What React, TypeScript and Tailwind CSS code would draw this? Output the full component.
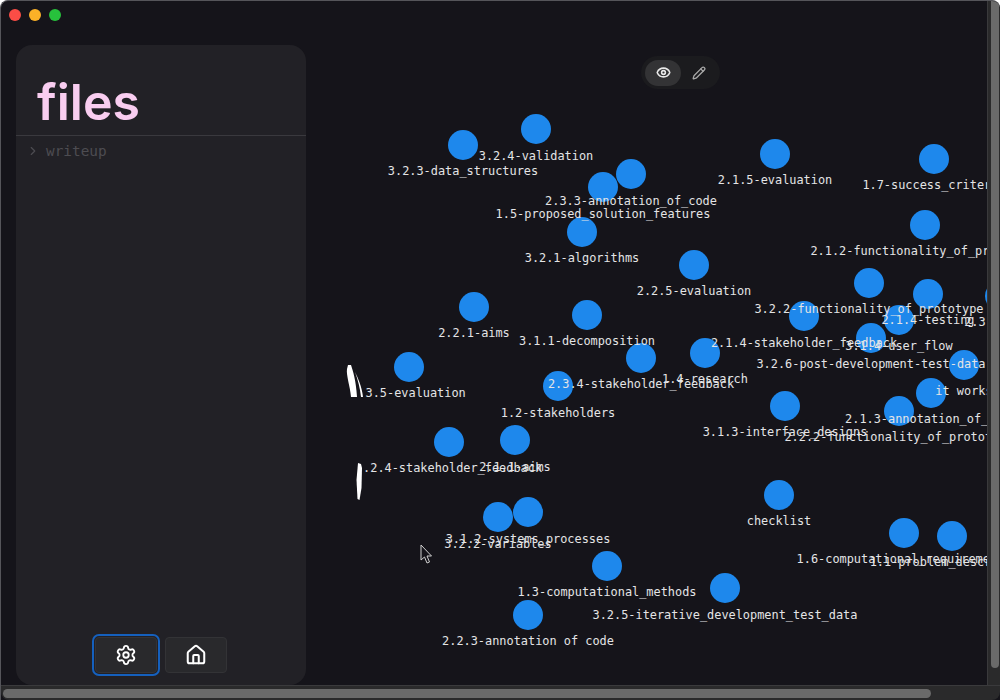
import { ChevronRight, Eye, House, Pencil, Settings } from "lucide-react";

// x, y = circle centre, ly = label centre line
const nodes: { x: number; y: number; ly: number; label: string }[] = [
  { x: 463, y: 145, ly: 171, label: "3.2.3-data_structures" },
  { x: 536, y: 129, ly: 156, label: "3.2.4-validation" },
  { x: 631, y: 174, ly: 201, label: "2.3.3-annotation_of_code" },
  { x: 603, y: 187, ly: 214, label: "1.5-proposed_solution_features" },
  { x: 582, y: 232, ly: 258, label: "3.2.1-algorithms" },
  { x: 775, y: 154, ly: 180, label: "2.1.5-evaluation" },
  { x: 934, y: 159, ly: 185, label: "1.7-success_criteria" },
  { x: 925, y: 225, ly: 251, label: "2.1.2-functionality_of_prototype" },
  { x: 694, y: 265, ly: 291, label: "2.2.5-evaluation" },
  { x: 869, y: 283, ly: 309, label: "3.2.2-functionality_of_prototype" },
  { x: 928, y: 294, ly: 320, label: "2.1.4-testing" },
  { x: 1000, y: 296, ly: 322, label: "2.3.2-aims" },
  { x: 899, y: 320, ly: 346, label: "3.1.4-user_flow" },
  { x: 871, y: 338, ly: 364, label: "3.2.6-post-development-test-data" },
  { x: 804, y: 316, ly: 343, label: "2.1.4-stakeholder_feedback" },
  { x: 964, y: 365, ly: 391, label: "it works" },
  { x: 931, y: 393, ly: 419, label: "2.1.3-annotation_of_code" },
  { x: 899, y: 411, ly: 437, label: "2.2.2-functionality_of_prototype" },
  { x: 785, y: 406, ly: 432, label: "3.1.3-interface_designs" },
  { x: 641, y: 358, ly: 384, label: "2.3.4-stakeholder_feedback" },
  { x: 705, y: 353, ly: 379, label: "1.4-research" },
  { x: 558, y: 386, ly: 413, label: "1.2-stakeholders" },
  { x: 587, y: 315, ly: 341, label: "3.1.1-decomposition" },
  { x: 474, y: 307, ly: 333, label: "2.2.1-aims" },
  { x: 408.5, y: 367, ly: 393, label: "2.3.5-evaluation" },
  { x: 449, y: 442, ly: 468, label: "3.2.4-stakeholder_feedback" },
  { x: 515, y: 440, ly: 467, label: "2.1.1-aims" },
  { x: 779, y: 494.5, ly: 521, label: "checklist" },
  { x: 498, y: 517, ly: 544, label: "3.2.2-variables" },
  { x: 528, y: 512, ly: 539, label: "3.1.2-systems_processes" },
  { x: 607, y: 566, ly: 592, label: "1.3-computational_methods" },
  { x: 725, y: 588, ly: 615, label: "3.2.5-iterative_development_test_data" },
  { x: 528, y: 615, ly: 641, label: "2.2.3-annotation of code" },
  { x: 904, y: 533, ly: 559, label: "1.6-computational_requirements" },
  { x: 952, y: 536, ly: 562, label: "1.1-problem_description" },
];

function Sidebar() {
  return (
    <aside className="flex h-[640px] w-[290px] flex-col rounded-2xl bg-[#222126]">
      <h1 className="h-[91px] border-b border-[#3a393e] pl-[21px] pt-[25px] font-['Inter',sans-serif] text-[50px] font-semibold leading-[64px] text-[#f9cdf0] [font-variant-ligatures:none]">
        files
      </h1>
      <div className="flex items-center gap-[6px] pl-[10px] pt-[6px] font-['DejaVu_Sans_Mono',monospace] text-[14.4px] leading-[18px] text-[#4d4c51]">
        <ChevronRight size={14} strokeWidth={2} />
        writeup
      </div>
      <div className="mt-auto flex justify-center gap-[8px] pb-[12px]">
        <button className="flex h-[36px] w-[62px] items-center justify-center rounded-[4px] border border-[#333336] bg-[#29292c] text-white outline-2 outline-offset-1 outline-[#1560bd]">
          <Settings size={22} strokeWidth={2} />
        </button>
        <button className="flex h-[36px] w-[62px] items-center justify-center rounded-[4px] border border-[#333336] bg-[#29292c] text-white">
          <House size={22} strokeWidth={2.2} />
        </button>
      </div>
    </aside>
  );
}

function Graph() {
  return (
    <>
      {nodes.map((n) => (
        <div
          key={n.label + "-dot"}
          className="absolute h-[30px] w-[30px] rounded-full bg-[#1e88ec]"
          style={{ left: n.x - 15, top: n.y - 15 }}
        />
      ))}
      {nodes.map((n) => (
        <div
          key={n.label}
          className="absolute whitespace-nowrap font-['DejaVu_Sans_Mono',monospace] text-[11.9px] leading-[16px] text-[#e4e4e6]"
          style={{ left: n.x - n.label.length * 3.58, top: n.ly - 8 }}
        >
          {n.label}
        </div>
      ))}
      {/* pencil scribbles on the canvas */}
      <svg className="absolute left-[340px] top-[360px] h-[145px] w-[30px]" viewBox="0 0 30 145" fill="none">
        <rect x="5" y="24" width="19" height="14" fill="#15141a" />
        <rect x="12" y="100" width="12" height="16" fill="#15141a" />
        <path d="M8 5 L11 5 C13 11 16 20 17 37 L11 37 C10 26 6 15 7 9 Z" fill="#fff" />
        <path d="M15 12 C18 18 22 27 23 37 L21 37 C20 28 18 20 15 12 Z" fill="#fff" />
        <path d="M18 103 L21 104 L22 108 L21.5 128 L19.5 140 L17.5 139 L16.5 120 Z" fill="#fff" />
      </svg>
      {/* mouse pointer */}
      <svg className="absolute left-[418px] top-[542px] h-[24px] w-[18px]" viewBox="0 0 18 24">
        <path d="M3 3 L3 18 L6.5 15 L9 21 L11.5 20 L9 14 L13.5 14 Z" fill="#15141a" stroke="#d0d0d0" strokeWidth="1" />
      </svg>
    </>
  );
}

export default function App() {
  return (
    <div className="flex h-[700px] w-[1000px] flex-col overflow-hidden rounded-t-lg border-l border-t border-[#55555a] bg-[#15141a]">
      <div className="flex min-h-0 flex-1">
        <main className="relative -ml-px -mt-px flex-1 overflow-hidden">
          <div className="flex h-[29px] items-center gap-2 pl-[9px] pt-px">
            <span className="h-3 w-3 rounded-full bg-[#fb4d46]" />
            <span className="h-3 w-3 rounded-full bg-[#fbb127]" />
            <span className="h-3 w-3 rounded-full bg-[#27c13c]" />
          </div>
          <div className="pl-4 pt-4">
            <Sidebar />
          </div>
          <Graph />
          <div className="absolute left-[641px] top-[56px] flex h-[33px] w-[79px] items-center rounded-full bg-[#1b1b1e] pl-1">
            <span className="flex h-[26px] w-[36px] items-center justify-center rounded-full bg-[#333335] text-[#e8e8e8]">
              <Eye size={15} strokeWidth={2.5} />
            </span>
            <span className="flex h-[26px] w-[36px] items-center justify-center text-[#a8a8a8]">
              <Pencil size={14} strokeWidth={2.2} />
            </span>
          </div>
        </main>
        <div className="w-[13px] border-l border-[#3a3a3c] bg-[#2a2a2b] pl-[3px]">
          <div className="h-[667px] w-[8px] rounded-b-full bg-[#6a6a6a]" />
        </div>
      </div>
      <div className="flex h-[15px] items-center rounded-b-lg border-t border-[#3a3a3c] bg-[#2a2a2b] pl-[2px]">
        <div className="h-[9px] w-[928px] rounded-full bg-[#6a6a6a]" />
      </div>
    </div>
  );
}
